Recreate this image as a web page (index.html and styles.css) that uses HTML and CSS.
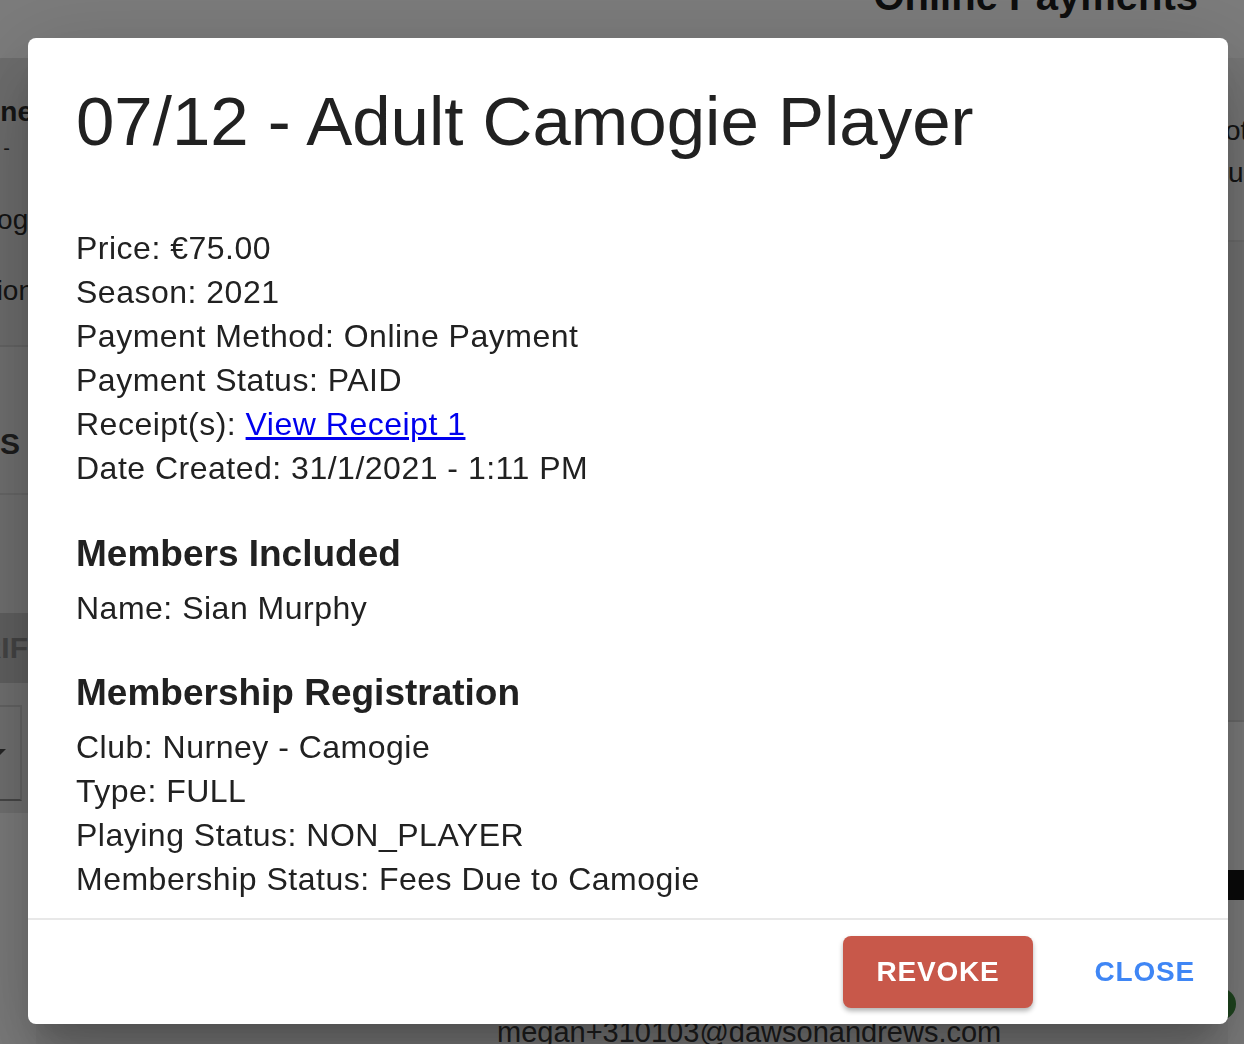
FILE: index.html
```html
<!DOCTYPE html>
<html lang="en">
<head>
    <meta charset="UTF-8">
    <title>Online Payments</title>
    <meta name="viewport" content="width=device-width, initial-scale=1.0">
    <link rel="stylesheet" href="styles.css">
</head>
<body>
    <div class="page">
        <header class="page-head">
            <h1>Online Payments</h1>
        </header>
        <div class="page-body">
            <aside class="side">
                <div class="side-card">
                    <p class="side-name">Online</p>
                    <p class="side-small">-</p>
                    <p class="side-line end-50">Camogie</p>
                    <p class="side-line end-34">Registration</p>
                </div>
                <div class="side-row"><span class="side-label">STATUS</span></div>
                <div class="side-gap"></div>
                <div class="side-btn">VERIFY</div>
                <div class="side-select">
                    <div class="side-box"><span class="side-arrow"></span></div>
                </div>
            </aside>
            <main class="main">
                <div class="main-spacer"></div>
                <p class="email">megan+310103@dawsonandrews.com</p>
            </main>
            <aside class="right">
                <div class="right-card">
                    <p>Total</p>
                    <p>Fund</p>
                </div>
                <div class="right-row"></div>
                <div class="right-black"></div>
                <div class="right-dot"></div>
            </aside>
        </div>
    </div>

    <div class="overlay">
        <div class="dialog">
            <div class="dialog-content">
                <h2 class="dialog-title">07/12 - Adult Camogie Player</h2>

                <div class="details">
                    <p>Price: €75.00</p>
                    <p>Season: 2021</p>
                    <p>Payment Method: Online Payment</p>
                    <p>Payment Status: PAID</p>
                    <p>Receipt(s): <a href="#">View Receipt 1</a></p>
                    <p>Date Created: 31/1/2021 - 1:11 PM</p>
                </div>

                <h3 class="section-title">Members Included</h3>
                <div class="details">
                    <p>Name: Sian Murphy</p>
                </div>

                <h3 class="section-title">Membership Registration</h3>
                <div class="details">
                    <p>Club: Nurney - Camogie</p>
                    <p>Type: FULL</p>
                    <p>Playing Status: NON_PLAYER</p>
                    <p>Membership Status: Fees Due to Camogie</p>
                </div>
            </div>
            <div class="dialog-actions">
                <button class="btn btn-revoke" type="button">Revoke</button>
                <button class="btn btn-close" type="button">Close</button>
            </div>
        </div>
    </div>
</body>
</html>
```

FILE: styles.css
```css
* {
    box-sizing: border-box;
}

body {
    font-family: "Liberation Sans", Arial, Helvetica, sans-serif;
    background-color: #f8f8f8;
    color: #212121;
    margin: 0;
    padding: 0;
    overflow: hidden;
    height: 1044px;
}

/* page underneath the dialog */

.page {
    height: 100%;
}

.page-head {
    height: 58px;
    display: flex;
    justify-content: flex-end;
    padding-right: 46px;
}

.page-head h1 {
    margin: -28px 0 0;
    font-size: 40px;
    line-height: 48px;
    font-weight: 700;
    color: #1c1c1c;
}

.page-body {
    display: grid;
    grid-template-columns: 188px 1fr 190px;
    margin-left: -152px;
    margin-right: -174px;
}

.side {
    text-align: right;
}

.side-card {
    background: #dcdcdc;
    height: 289px;
    padding-top: 36px;
    border-bottom: 2px solid #cbcbcb;
}

.side-card p {
    margin: 0;
    font-size: 28px;
    line-height: 36px;
    color: #2a2a2a;
}

.side-name {
    font-weight: 700;
    margin-right: 3px !important;
}

.side-small {
    margin-bottom: 36px !important;
    padding-right: 26px;
    font-size: 20px !important;
}

.side-line {
    margin-bottom: 35px !important;
}

.side-line.end-50 {
    margin-right: -14px !important;
}

.side-line.end-34 {
    margin-right: 2px !important;
}

.side-row {
    height: 148px;
    background: #e2e2e2;
    border-bottom: 2px solid #d0d0d0;
    padding: 80px 16px 0 0;
}

.side-label {
    font-size: 30px;
    font-weight: 700;
    color: #3a3a3a;
}

.side-gap {
    height: 118px;
    background: #e2e2e2;
}

.side-btn {
    height: 70px;
    margin-right: -12px;
    background: #c2c2c2;
    color: #8a8a8a;
    font-size: 30px;
    font-weight: 700;
    line-height: 70px;
}

.side-select {
    height: 130px;
    background: #e2e2e2;
    padding: 22px 14px 0 40px;
}

.side-box {
    height: 96px;
    border: 2px solid #c8c8c8;
    border-bottom-color: #8e8e8e;
    display: flex;
    justify-content: flex-end;
    align-items: center;
    padding-right: 14px;
}

.side-arrow {
    width: 0;
    height: 0;
    border-left: 8px solid transparent;
    border-right: 8px solid transparent;
    border-top: 8px solid #4a4a4a;
}

.main {
    background: #f0f0f0;
}

.main-spacer {
    height: 894px;
    border-bottom: 2px solid #d6d6d6;
}

.email {
    margin: 62px 0 0 461px;
    font-size: 29px;
    line-height: 36px;
    color: #3a3a3a;
}

.right-card {
    height: 184px;
    background: #ececec;
    padding-top: 52px;
    border-bottom: 2px solid #d8d8d8;
}

.right-card p {
    margin: 0 0 0 -17px;
    font-size: 28px;
    line-height: 42px;
    color: #2a2a2a;
}

.right-row {
    height: 480px;
    background: #e4e4e4;
    border-bottom: 2px solid #d4d4d4;
}

.right-black {
    width: 60px;
    height: 30px;
    margin: 148px 0 0 -20px;
    background: #141414;
    border-radius: 6px;
}

.right-dot {
    width: 32px;
    height: 32px;
    margin: 88px 0 0 -24px;
    border-radius: 50%;
    background: #3d8a3d;
}

/* dialog */

.overlay {
    position: fixed;
    inset: 0;
    background: rgba(0, 0, 0, 0.5);
    padding: 38px 16px 20px 28px;
    display: flex;
}

.dialog {
    flex: 1;
    background: #fff;
    border-radius: 8px;
    display: flex;
    flex-direction: column;
    overflow: hidden;
    box-shadow: 0 22px 30px -14px rgba(0, 0, 0, 0.2),
                0 48px 76px 6px rgba(0, 0, 0, 0.14),
                0 18px 92px 16px rgba(0, 0, 0, 0.12);
}

.dialog-content {
    flex: 1;
    padding: 0 48px;
    overflow: hidden;
}

.dialog-title {
    margin: 44px 0 64px;
    font-size: 69px;
    line-height: 80px;
    font-weight: 400;
    color: #212121;
}

.details p {
    margin: 0;
    font-size: 32px;
    line-height: 44px;
    letter-spacing: 0.5px;
}

.details a {
    color: #0000ee;
}

.section-title {
    margin: 42px 0 10px;
    font-size: 37px;
    line-height: 44px;
    font-weight: 700;
}

.section-title + .details + .section-title {
    margin-top: 41px;
}

.dialog-actions {
    border-top: 2px solid #e8e8e8;
    padding: 16px;
    display: flex;
    justify-content: flex-end;
    gap: 45px;
}

.btn {
    height: 72px;
    padding: 0 33px;
    font-family: inherit;
    font-size: 28px;
    font-weight: 700;
    letter-spacing: 0.8px;
    text-transform: uppercase;
    border: none;
    border-radius: 8px;
    cursor: pointer;
}

.btn-revoke {
    background-color: #c8584a;
    color: #fff;
    box-shadow: 0 3px 5px rgba(0, 0, 0, 0.3);
}

.btn-close {
    padding: 0 17px;
    background: transparent;
    color: #3f86f5;
}
```
